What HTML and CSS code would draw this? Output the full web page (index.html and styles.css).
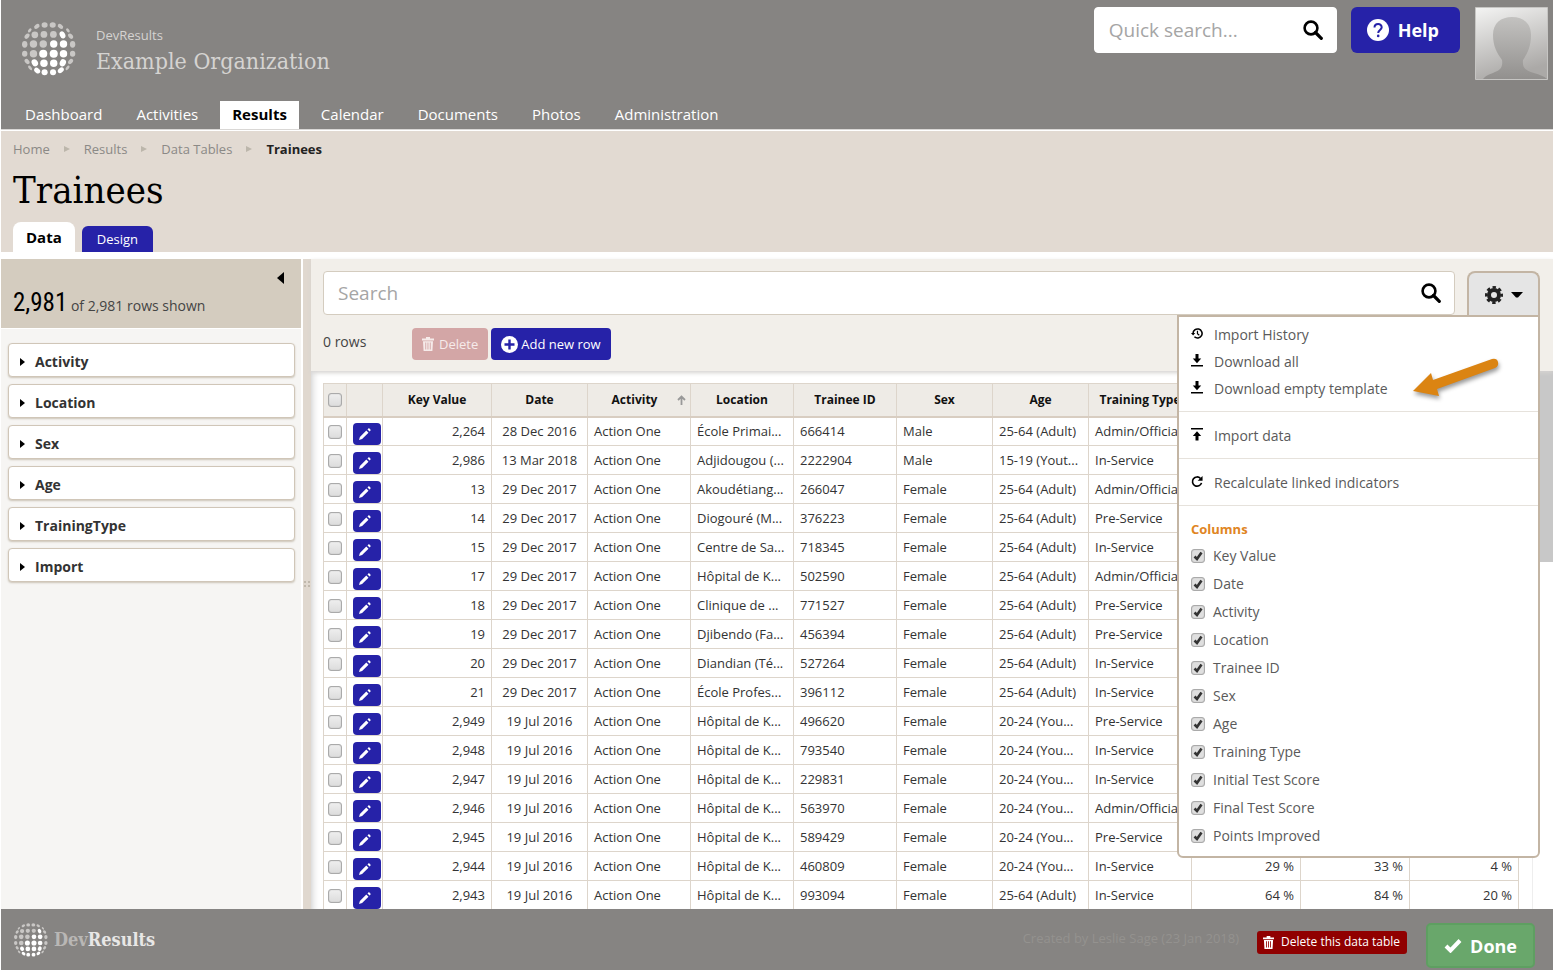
FILE: index.html
```html
<!DOCTYPE html>
<html lang="en">
  <head>
    <meta charset="utf-8" />
    <title>Trainees - DevResults</title>
    <link rel="stylesheet" href="styles.css">
  </head>
  <body>
    <svg class="sprite" aria-hidden="true">
      <symbol id="globe" viewBox="0 0 160 160">
        <g fill="#c9c7c5">
          <ellipse cx="67" cy="9" rx="9" ry="8" /><ellipse cx="91" cy="9" rx="9" ry="8" />
          <ellipse cx="44" cy="13" rx="9" ry="6" transform="rotate(-35 44 13)" />
          <ellipse cx="114" cy="13" rx="9" ry="6" transform="rotate(35 114 13)" />
          <ellipse cx="23" cy="25" rx="7" ry="4" transform="rotate(-50 23 25)" />
          <ellipse cx="136" cy="25" rx="7" ry="4" transform="rotate(50 136 25)" />
          <ellipse cx="15" cy="42" rx="9" ry="6" transform="rotate(-50 15 42)" />
          <circle cx="38" cy="38" r="10" /><circle cx="65" cy="37" r="10" /><circle cx="93" cy="37" r="10" />
          <ellipse cx="144" cy="42" rx="9" ry="6" transform="rotate(50 144 42)" />
          <ellipse cx="8" cy="66" rx="8" ry="10" /><circle cx="34" cy="65" r="11" /><circle cx="63" cy="65" r="11" />
          <ellipse cx="150" cy="66" rx="8" ry="10" />
          <ellipse cx="8" cy="94" rx="8" ry="9" /><circle cx="34" cy="94" r="11" /><ellipse cx="150" cy="94" rx="8" ry="9" />
          <ellipse cx="15" cy="117" rx="9" ry="6" transform="rotate(50 15 117)" />
          <ellipse cx="144" cy="117" rx="9" ry="6" transform="rotate(-50 144 117)" />
          <ellipse cx="24" cy="136" rx="8" ry="4" transform="rotate(50 24 136)" />
          <ellipse cx="135" cy="136" rx="8" ry="4" transform="rotate(-50 135 136)" />
        </g>
        <g fill="#fff">
          <ellipse cx="120" cy="38" rx="8" ry="11" transform="rotate(-25 120 38)" />
          <circle cx="94" cy="65" r="11" /><circle cx="123" cy="65" r="11" />
          <circle cx="63" cy="94" r="12" /><circle cx="94" cy="94" r="12" /><circle cx="123" cy="94" r="11" />
          <ellipse cx="38" cy="121" rx="9" ry="11" transform="rotate(-30 38 121)" /><circle cx="65" cy="122" r="11" />
          <circle cx="94" cy="122" r="11" /><ellipse cx="121" cy="121" rx="9" ry="11" transform="rotate(25 121 121)" />
          <ellipse cx="45" cy="144" rx="10" ry="7" transform="rotate(40 45 144)" /><ellipse cx="67" cy="149" rx="9" ry="9" />
          <ellipse cx="92" cy="149" rx="9" ry="9" /><ellipse cx="115" cy="143" rx="10" ry="7" transform="rotate(-40 115 143)" />
        </g>
      </symbol>
      <symbol id="search" viewBox="0 0 20 20">
        <circle cx="8" cy="8" r="6.4" fill="none" stroke="#000" stroke-width="2.6" />
        <path d="M12.5 12.5l5.8 5.8" stroke="#000" stroke-width="3.2" stroke-linecap="round" />
      </symbol>
      <symbol id="trash" viewBox="0 0 12 14">
        <path fill="currentColor" fill-rule="evenodd" d="M4 0h4v1.5h4V3.500H0V1.500h4zM1 4.300h10L10.400 14H1.600zM3.300 5.500v7h.9v-7zM5.500 5.500v7h.9v-7zM7.800 5.500v7h.9v-7z" />
      </symbol>
      <symbol id="pencil" viewBox="0 0 12 12">
        <path fill="#fff" d="M0 12l.9-3.100L7.300 2.500 9.500 4.700 3.100 11.100zM8.500 1.400l.8-.8q.6-.5 1.200 0l.9.900q.5.600 0 1.200l-.8.800z" />
      </symbol>
      <symbol id="download" viewBox="0 0 12 13">
        <path d="M4.500 0h3v4.500h2.700L6 9.300 1.800 4.500h2.700zM0 11h12v1.600H0z" />
      </symbol>
      <symbol id="upload" viewBox="0 0 12 13">
        <path d="M0 0h12v1.600H0zM6 3.200l4.200 4.700H7.500v4.700h-3V7.900H1.800z" />
      </symbol>
    </svg>

    <header class="header">
      <div class="header-top">
        <svg class="logo"><use href="#globe" /></svg>
        <div class="org">
          <div class="org-site">DevResults</div>
          <div class="org-name">Example Organization</div>
        </div>
        <label class="search quick">
          <input type="text" placeholder="Quick search..." aria-label="Quick search" />
          <svg class="search-icon"><use href="#search" /></svg>
        </label>
        <button class="help">
          <svg width="22" height="22" viewBox="0 0 22 22">
            <circle cx="11" cy="11" r="11" fill="#fff" />
            <path d="M7.500 8.600c0-4.600 7.200-4.600 7.200-.3 0 2.600-3.500 2.700-3.500 5.600" fill="none" stroke="#2622a8" stroke-width="2" />
            <circle cx="11.200" cy="16.900" r="1.300" fill="#2622a8" />
          </svg>
          Help
        </button>
        <svg class="avatar" viewBox="0 0 73 73">
          <defs>
            <linearGradient id="back" x1="0" y1="0" x2=".3" y2="1">
              <stop offset="0" stop-color="#f4f4f3" /><stop offset="1" stop-color="#aba9a7" />
            </linearGradient>
            <linearGradient id="person" x1="0" y1="0" x2="0" y2="1">
              <stop offset="0" stop-color="#c3c2c0" /><stop offset="1" stop-color="#92908e" />
            </linearGradient>
          </defs>
          <path fill="url(#back)" stroke="#c6c5c3" d="M.5.5h72v72H.5z" />
          <path fill="url(#person)" d="M37 10c12 0 19 7 19 18 0 12-4 19-8 25-1 9 4 11 11 13 6 2 10 3 13 6H8c3-4 8-5 12-7 6-2 8-6 7-12-5-7-9-14-9-25 0-12 8-18 19-18z" />
        </svg>
      </div>
      <nav class="nav">
        <a href="#">Dashboard</a>
        <a href="#">Activities</a>
        <a href="#" class="active">Results</a>
        <a href="#">Calendar</a>
        <a href="#">Documents</a>
        <a href="#">Photos</a>
        <a href="#">Administration</a>
      </nav>
    </header>

    <div class="page-head">
      <div class="crumbs">
        <a href="#">Home</a><i></i><a href="#">Results</a><i></i><a href="#">Data Tables</a><i></i><b>Trainees</b>
      </div>
      <h1>Trainees</h1>
      <div class="tabs">
        <a href="#" class="tab active">Data</a>
        <a href="#" class="tab">Design</a>
      </div>
    </div>

    <div class="main">
      <aside class="sidebar">
        <div class="count">
          <button class="collapse" aria-label="Collapse"></button>
          <span class="count-number">2,981</span> of 2,981 rows shown
        </div>
        <div class="facets">
          <button class="facet">Activity</button>
          <button class="facet">Location</button>
          <button class="facet">Sex</button>
          <button class="facet">Age</button>
          <button class="facet">TrainingType</button>
          <button class="facet">Import</button>
        </div>
      </aside>
      <div class="splitter"></div>
      <section class="content">
        <div class="toolbar">
          <div class="toolbar-top">
            <label class="search">
              <input type="text" placeholder="Search" aria-label="Search" />
              <svg class="search-icon"><use href="#search" /></svg>
            </label>
            <div class="settings">
              <button class="gear" aria-label="Settings">
                <svg width="18" height="18" viewBox="0 0 18 18">
                  <circle cx="9" cy="9" r="5" fill="none" stroke="#222" stroke-width="4" />
                  <circle cx="9" cy="9" r="7.700" fill="none" stroke="#222" stroke-width="2.600" stroke-dasharray="3.400 2.648" stroke-dashoffset="1.700" />
                </svg>
                <svg width="12" height="6" viewBox="0 0 12 6"><path d="M0 0h12L7 5.500H5z" /></svg>
              </button>
              <div class="menu">
                <div class="menu-group">
                  <a href="#" class="menu-item">
                    <svg viewBox="0 0 13 13"><path d="M2.200 6.500a4.900 4.900 0 1 1 1.500 3.500" fill="none" stroke="#000" stroke-width="1.700" /><path d="M0 6h4.600L2.300 8.800z" /><path d="M7 3.500v3.200l2 1.700" fill="none" stroke="#000" stroke-width="1.300" /></svg>
                    Import History
                  </a>
                  <a href="#" class="menu-item"><svg><use href="#download" /></svg>Download all</a>
                  <a href="#" class="menu-item">
                    <svg><use href="#download" /></svg>Download empty template
                  </a>
                  <svg class="pointer" viewBox="0 0 94 50">
                    <path fill="#db8412" d="M3 36L21 18l2 7L82 4q5-1 6 3t-3 6L27 34l2 7z" />
                  </svg>
                </div>
                <div class="menu-group">
                  <a href="#" class="menu-item"><svg><use href="#upload" /></svg>Import data</a>
                </div>
                <div class="menu-group">
                  <a href="#" class="menu-item">
                    <svg viewBox="0 0 13 13"><path d="M10.300 3.200A5 5 0 1 0 11.400 8" fill="none" stroke="#000" stroke-width="1.800" /><path d="M12.500.5v5.300H7.200z" /></svg>
                    Recalculate linked indicators
                  </a>
                </div>
                <div class="menu-group columns">
                  <div class="menu-title">Columns</div>
                  <label><input type="checkbox" checked />Key Value</label>
                  <label><input type="checkbox" checked />Date</label>
                  <label><input type="checkbox" checked />Activity</label>
                  <label><input type="checkbox" checked />Location</label>
                  <label><input type="checkbox" checked />Trainee ID</label>
                  <label><input type="checkbox" checked />Sex</label>
                  <label><input type="checkbox" checked />Age</label>
                  <label><input type="checkbox" checked />Training Type</label>
                  <label><input type="checkbox" checked />Initial Test Score</label>
                  <label><input type="checkbox" checked />Final Test Score</label>
                  <label><input type="checkbox" checked />Points Improved</label>
                </div>
              </div>
            </div>
          </div>
          <div class="actions">
            <span class="selected">0 rows</span>
            <button class="btn btn-delete" disabled><svg width="12" height="14"><use href="#trash" /></svg>Delete</button>
            <button class="btn btn-add">
              <svg width="17" height="17" viewBox="0 0 17 17"><circle cx="8.500" cy="8.500" r="8.500" fill="#fff" /><path d="M8.500 3.500v10M3.500 8.500h10" stroke="#2622a8" stroke-width="2.400" /></svg>Add new row
            </button>
          </div>
        </div>
        <div class="grid">
          <div class="grid-view">
            <table>
              <colgroup>
                <col class="w-check" /><col class="w-edit" /><col class="w-score" /><col class="w-date" />
                <col class="w-text" /><col class="w-text" /><col class="w-text" /><col class="w-date" />
                <col class="w-date" /><col class="w-text" /><col class="w-score" /><col class="w-score" />
                <col class="w-score" />
              </colgroup>
              <thead>
                <tr>
                  <th><input type="checkbox" aria-label="Select all" /></th>
                  <th></th>
                  <th>Key Value</th>
                  <th>Date</th>
                  <th class="sorted">Activity<svg width="9" height="10" viewBox="0 0 9 10"><path d="M4.500 10V1.500M1 5l3.500-3.500L8 5" fill="none" stroke="#999" stroke-width="1.800" /></svg></th>
                  <th>Location</th>
                  <th>Trainee ID</th>
                  <th>Sex</th>
                  <th>Age</th>
                  <th>Training Type</th>
                  <th></th>
                  <th></th>
                  <th></th>
                </tr>
              </thead>
              <tbody id="rows"></tbody>
            </table>
          </div>
          <div class="scrollbar"><div class="thumb"></div></div>
        </div>
      </section>
    </div>

    <footer class="footer">
      <svg class="footer-logo"><use href="#globe" /></svg>
      <div class="footer-name"><span>Dev</span>Results</div>
      <div class="created">Created by Leslie Sage (23 Jan 2018)</div>
      <button class="btn-remove"><svg width="11" height="13"><use href="#trash" /></svg>Delete this data table</button>
      <button class="btn-done">
        <svg width="18" height="15" viewBox="0 0 18 15"><path d="M2 8l4.500 4.500L16 2.500" fill="none" stroke="#fff" stroke-width="4" /></svg>Done
      </button>
    </footer>
    <script src="script.js"></script>
  </body>
</html>
```

FILE: styles.css
```css
* {
  box-sizing: border-box;
}
html,
body {
  height: 100%;
  margin: 0;
}
body {
  display: flex;
  flex-direction: column;
  padding-left: 1px;
  overflow: hidden;
  background: #fff;
  color: #444;
  font: 14px/20px "Open Sans", sans-serif;
}
a {
  color: inherit;
  text-decoration: none;
}
button,
input {
  margin: 0;
  font: inherit;
}
button {
  border: 0;
  cursor: pointer;
}
svg {
  flex: none;
}
.sprite {
  position: absolute;
  width: 0;
  height: 0;
}

/* header */
.header {
  flex: none;
  background: #868482;
  border-bottom: 1px solid #d9d7d5;
}
.header-top {
  display: flex;
  align-items: flex-start;
  height: 101px;
  padding: 7px 5px 0 21px;
}
.logo {
  width: 54px;
  height: 54px;
  margin: 15px 20px 0 0;
}
.org {
  flex: 1;
  padding-top: 18px;
  color: #d5d3d1;
}
.org-site {
  font-size: 13px;
}
.org-name {
  font: 23px/32px "Roboto Slab", "DejaVu Serif Condensed", serif;
}
.search {
  display: flex;
  align-items: center;
  flex: 1;
  height: 44px;
  padding: 0 13px 0 14px;
  background: #fff;
  border: 1px solid #d4ccbf;
  border-radius: 4px;
}
.search input {
  flex: 1;
  min-width: 0;
  padding: 0;
  border: 0;
  outline: 0;
  background: none;
  font-size: 19px;
}
.search input::placeholder {
  color: #a5a5a5;
}
.search-icon {
  width: 20px;
  height: 20px;
}
.quick {
  flex: none;
  width: 243px;
  height: 46px;
  border-color: #fff;
}
.help {
  display: flex;
  align-items: center;
  gap: 9px;
  height: 46px;
  margin: 0 15px 0 14px;
  padding: 0 21px 0 16px;
  border-radius: 6px;
  background: #2622a8;
  color: #fff;
  font-size: 18px;
  font-weight: bold;
}
.avatar {
  width: 73px;
  height: 73px;
}
.nav {
  display: flex;
  gap: 10px;
  padding-left: 12px;
  color: #fff;
  font-size: 15px;
}
.nav a {
  padding: 3px 12px 5px;
}
.nav .active {
  background: #fff;
  color: #000;
  font-weight: bold;
}

/* title and tabs */
.page-head {
  flex: none;
  margin-top: 1px;
  padding: 8px 12px 0;
  background: #e2dad2;
}
.crumbs {
  display: flex;
  align-items: center;
  color: #8b8986;
  font-size: 13px;
}
.crumbs b {
  color: #222;
}
.crumbs i {
  margin: 0 14px;
  border-left: 6px solid #bcb6ab;
  border-top: 3px solid transparent;
  border-bottom: 3px solid transparent;
}
h1 {
  margin: 6px 0 7px;
  color: #000;
  font: 38px/50px "Roboto Slab", "DejaVu Serif Condensed", serif;
}
.tabs {
  display: flex;
  align-items: flex-end;
  gap: 7px;
}
.tab {
  padding: 3px 15px;
  border-radius: 6px 6px 0 0;
  background: #2622a8;
  color: #fff;
  font-size: 13px;
}
.tab.active {
  padding: 5px 13px;
  border-radius: 8px 8px 0 0;
  background: #fff;
  color: #000;
  font-size: 15px;
  font-weight: bold;
}

/* sidebar */
.main {
  display: flex;
  flex: 1;
  min-height: 0;
  margin-top: 7px;
}
.sidebar {
  flex: none;
  width: 300px;
  background: #f6f5f3;
}
.count {
  position: relative;
  height: 70px;
  padding: 28px 12px 0;
  border-bottom: 1px solid #fff;
  background: #d4ccbf;
  line-height: 32px;
}
.count-number {
  color: #000;
  font: 25px/32px "Liberation Sans Narrow", "Roboto Condensed", sans-serif;
}
.collapse {
  position: absolute;
  top: 13px;
  right: 17px;
  padding: 0;
  background: none;
  border-right: 7px solid #000;
  border-top: 6px solid transparent;
  border-bottom: 6px solid transparent;
}
.facets {
  display: flex;
  flex-direction: column;
  gap: 7px;
  padding: 14px 6px 0 7px;
}
.facet {
  display: flex;
  align-items: center;
  gap: 10px;
  height: 34px;
  padding: 3px 11px 0;
  border: 1px solid #d0c6b8;
  border-radius: 4px;
  background: #fff;
  box-shadow: 0 1px 2px #ccc4b8;
  color: #333;
  font-weight: bold;
}
.facet::before {
  content: "";
  border-left: 5px solid #000;
  border-top: 4px solid transparent;
  border-bottom: 4px solid transparent;
}
.splitter {
  display: flex;
  align-items: center;
  justify-content: center;
  flex: none;
  width: 8px;
  margin-left: 2px;
  background: #e0d8cf;
}
.splitter::before {
  content: "";
  height: 6px;
  border-left: 2px dotted #c0b8ac;
  border-right: 2px dotted #c0b8ac;
  padding-left: 2px;
}

/* toolbar */
.content {
  display: flex;
  flex-direction: column;
  flex: 1;
  min-width: 0;
}
.toolbar {
  z-index: 1;
  flex: none;
  height: 112px;
  padding: 12px 13px 0 12px;
  background: #f2efea;
  box-shadow: 0 2px 4px #d5d3d1;
}
.toolbar-top {
  display: flex;
  gap: 12px;
}
.settings {
  position: relative;
}
.gear {
  display: flex;
  align-items: center;
  justify-content: center;
  gap: 8px;
  width: 73px;
  height: 45px;
  border: 2px solid #c3b5a4;
  border-bottom: 0;
  border-radius: 8px 8px 0 0;
  background: #e5e5e5;
}
.actions {
  display: flex;
  gap: 3px;
  padding-top: 12px;
}
.selected {
  width: 86px;
  padding-top: 4px;
}
.btn {
  display: flex;
  align-items: center;
  height: 32px;
  padding: 0 10px;
  border-radius: 4px;
  color: #fff;
  font-size: 13px;
}
.btn-delete {
  gap: 5px;
  background: #d3a6a6;
  color: #f6ebea;
}
.btn-add {
  gap: 3px;
  background: #2622a8;
}

/* settings menu */
.menu {
  position: absolute;
  top: 44px;
  right: 0;
  width: 363px;
  border: 2px solid #c3b5a4;
  border-radius: 0 0 6px 6px;
  background: #fff;
}
.menu-group {
  position: relative;
  padding: 10px 12px 9px;
  border-top: 1px solid #e6e2dc;
}
.menu-group:first-child {
  padding-top: 4px;
  border-top: 0;
}
.menu-item {
  display: flex;
  align-items: center;
  gap: 11px;
  height: 27px;
  color: #5a5a5a;
}
.menu-item svg {
  width: 12px;
  height: 13px;
  margin-bottom: 2px;
}
.pointer {
  position: absolute;
  top: 38px;
  right: 34px;
  width: 94px;
  height: 50px;
  filter: drop-shadow(1px 3px 2px #999);
}
.columns {
  padding-bottom: 6px;
}
.menu-title {
  height: 26px;
  color: #e08523;
  font-size: 13px;
  line-height: 26px;
  font-weight: bold;
}
.columns label {
  display: flex;
  align-items: center;
  gap: 8px;
  height: 28px;
  color: #5a5a5a;
}

input[type="checkbox"] {
  appearance: none;
  width: 14px;
  height: 14px;
  border: 1px solid #aaa;
  border-radius: 3px;
  background: linear-gradient(#eee, #dcdcdc);
  box-shadow: inset 0 0 1px #999;
  vertical-align: middle;
}
input[type="checkbox"]:checked {
  background: #dfdfdf url("data:image/svg+xml,%3Csvg xmlns='http://www.w3.org/2000/svg' viewBox='0 0 12 12'%3E%3Cpath d='M2.500 6.500l2.500 2.500L9.500 2.500' fill='none' stroke='%23333' stroke-width='2.600'/%3E%3C/svg%3E");
}

/* data grid */
.grid {
  display: flex;
  flex: 1;
  min-height: 0;
}
.grid-view {
  flex: 1;
  min-width: 0;
  margin-right: 7px;
  padding: 12px 0 0 12px;
  overflow: hidden;
  border-right: 1px solid #eee;
  box-shadow: inset 8px 0 8px -8px #bbb;
}
.scrollbar {
  width: 13px;
}
.thumb {
  height: 191px;
  background: #c8c8c8;
}
table {
  width: 1196px;
  table-layout: fixed;
  border-collapse: collapse;
  color: #333;
  font-size: 13px;
}
.w-check {
  width: 23px;
}
.w-edit {
  width: 36px;
}
.w-score {
  width: 109px;
}
.w-date {
  width: 96px;
}
.w-text {
  width: 103px;
}
th,
td {
  height: 29px;
  padding: 0 6px;
  border: 1px solid #ddd5cb;
  overflow: hidden;
  white-space: nowrap;
}
th {
  height: 33px;
  padding: 0 4px;
  border-bottom: 2px solid #d8cdc1;
  background: #eeebe6;
  color: #111;
  font-size: 12px;
}
th:first-child,
td:first-child {
  padding: 0 0 2px;
  text-align: center;
}
.sorted svg {
  float: right;
  margin-top: 5px;
}
.number {
  text-align: right;
}
.date {
  text-align: center;
}
.edit {
  padding: 5px 0 0 6px;
  line-height: 0;
}
.edit button {
  width: 28px;
  height: 22px;
  padding: 1px 4px 0 0;
  border-radius: 4px;
  background: #2622a8;
  line-height: 0;
}

/* footer */
.footer {
  display: flex;
  align-items: center;
  flex: none;
  height: 61px;
  padding: 0 18px 0 13px;
  background: #868482;
}
.footer-logo {
  width: 34px;
  height: 34px;
  margin-right: 6px;
}
.footer-name {
  flex: 1;
  color: #e8e7e6;
  font: bold 18px/24px "Roboto Slab", "DejaVu Serif Condensed", serif;
}
.footer-name span {
  color: #b9b7b5;
}
.created {
  margin: 0 18px 4px 0;
  color: #94928f;
  font-size: 13px;
}
.btn-remove {
  display: flex;
  align-items: center;
  gap: 7px;
  height: 23px;
  margin: 5px 19px 0 0;
  padding: 0 7px 0 6px;
  border-radius: 3px;
  background: #900000;
  color: #fff;
  font-size: 12px;
}
.btn-done {
  display: flex;
  align-items: center;
  gap: 8px;
  height: 45px;
  margin-top: 12px;
  padding: 0 16px;
  border: 2px solid #5e9f61;
  border-radius: 5px;
  background: #69a76b;
  color: #fff;
  font-size: 18px;
  font-weight: bold;
}
```

FILE: script.js
```js
const rows = [
  ["2,264", "28 Dec 2016", "École Primai...", "666414", "Male", "25-64 (Adult)", "Admin/Official"],
  ["2,986", "13 Mar 2018", "Adjidougou (...", "2222904", "Male", "15-19 (Yout...", "In-Service"],
  ["13", "29 Dec 2017", "Akoudétiang...", "266047", "Female", "25-64 (Adult)", "Admin/Official"],
  ["14", "29 Dec 2017", "Diogouré (M...", "376223", "Female", "25-64 (Adult)", "Pre-Service"],
  ["15", "29 Dec 2017", "Centre de Sa...", "718345", "Female", "25-64 (Adult)", "In-Service"],
  ["17", "29 Dec 2017", "Hôpital de K...", "502590", "Female", "25-64 (Adult)", "Admin/Official"],
  ["18", "29 Dec 2017", "Clinique de ...", "771527", "Female", "25-64 (Adult)", "Pre-Service"],
  ["19", "29 Dec 2017", "Djibendo (Fa...", "456394", "Female", "25-64 (Adult)", "Pre-Service"],
  ["20", "29 Dec 2017", "Diandian (Té...", "527264", "Female", "25-64 (Adult)", "In-Service"],
  ["21", "29 Dec 2017", "École Profes...", "396112", "Female", "25-64 (Adult)", "In-Service"],
  ["2,949", "19 Jul 2016", "Hôpital de K...", "496620", "Female", "20-24 (You...", "Pre-Service"],
  ["2,948", "19 Jul 2016", "Hôpital de K...", "793540", "Female", "20-24 (You...", "In-Service"],
  ["2,947", "19 Jul 2016", "Hôpital de K...", "229831", "Female", "20-24 (You...", "In-Service"],
  ["2,946", "19 Jul 2016", "Hôpital de K...", "563970", "Female", "20-24 (You...", "Admin/Official"],
  ["2,945", "19 Jul 2016", "Hôpital de K...", "589429", "Female", "20-24 (You...", "Pre-Service"],
  ["2,944", "19 Jul 2016", "Hôpital de K...", "460809", "Female", "20-24 (You...", "In-Service", "29 %", "33 %", "4 %"],
  ["2,943", "19 Jul 2016", "Hôpital de K...", "993094", "Female", "25-64 (Adult)", "In-Service", "64 %", "84 %", "20 %"],
];

document.getElementById("rows").innerHTML = rows
  .map(([key, date, place, id, sex, age, type, first = "", last = "", diff = ""]) => `
    <tr>
      <td><input type="checkbox" aria-label="Select ${key}" /></td>
      <td class="edit"><button aria-label="Edit ${key}"><svg width="12" height="12"><use href="#pencil" /></svg></button></td>
      <td class="number">${key}</td>
      <td class="date">${date}</td>
      <td>Action One</td>
      <td>${place}</td>
      <td>${id}</td>
      <td>${sex}</td>
      <td>${age}</td>
      <td>${type}</td>
      <td class="number">${first}</td>
      <td class="number">${last}</td>
      <td class="number">${diff}</td>
    </tr>`)
  .join("");
```
